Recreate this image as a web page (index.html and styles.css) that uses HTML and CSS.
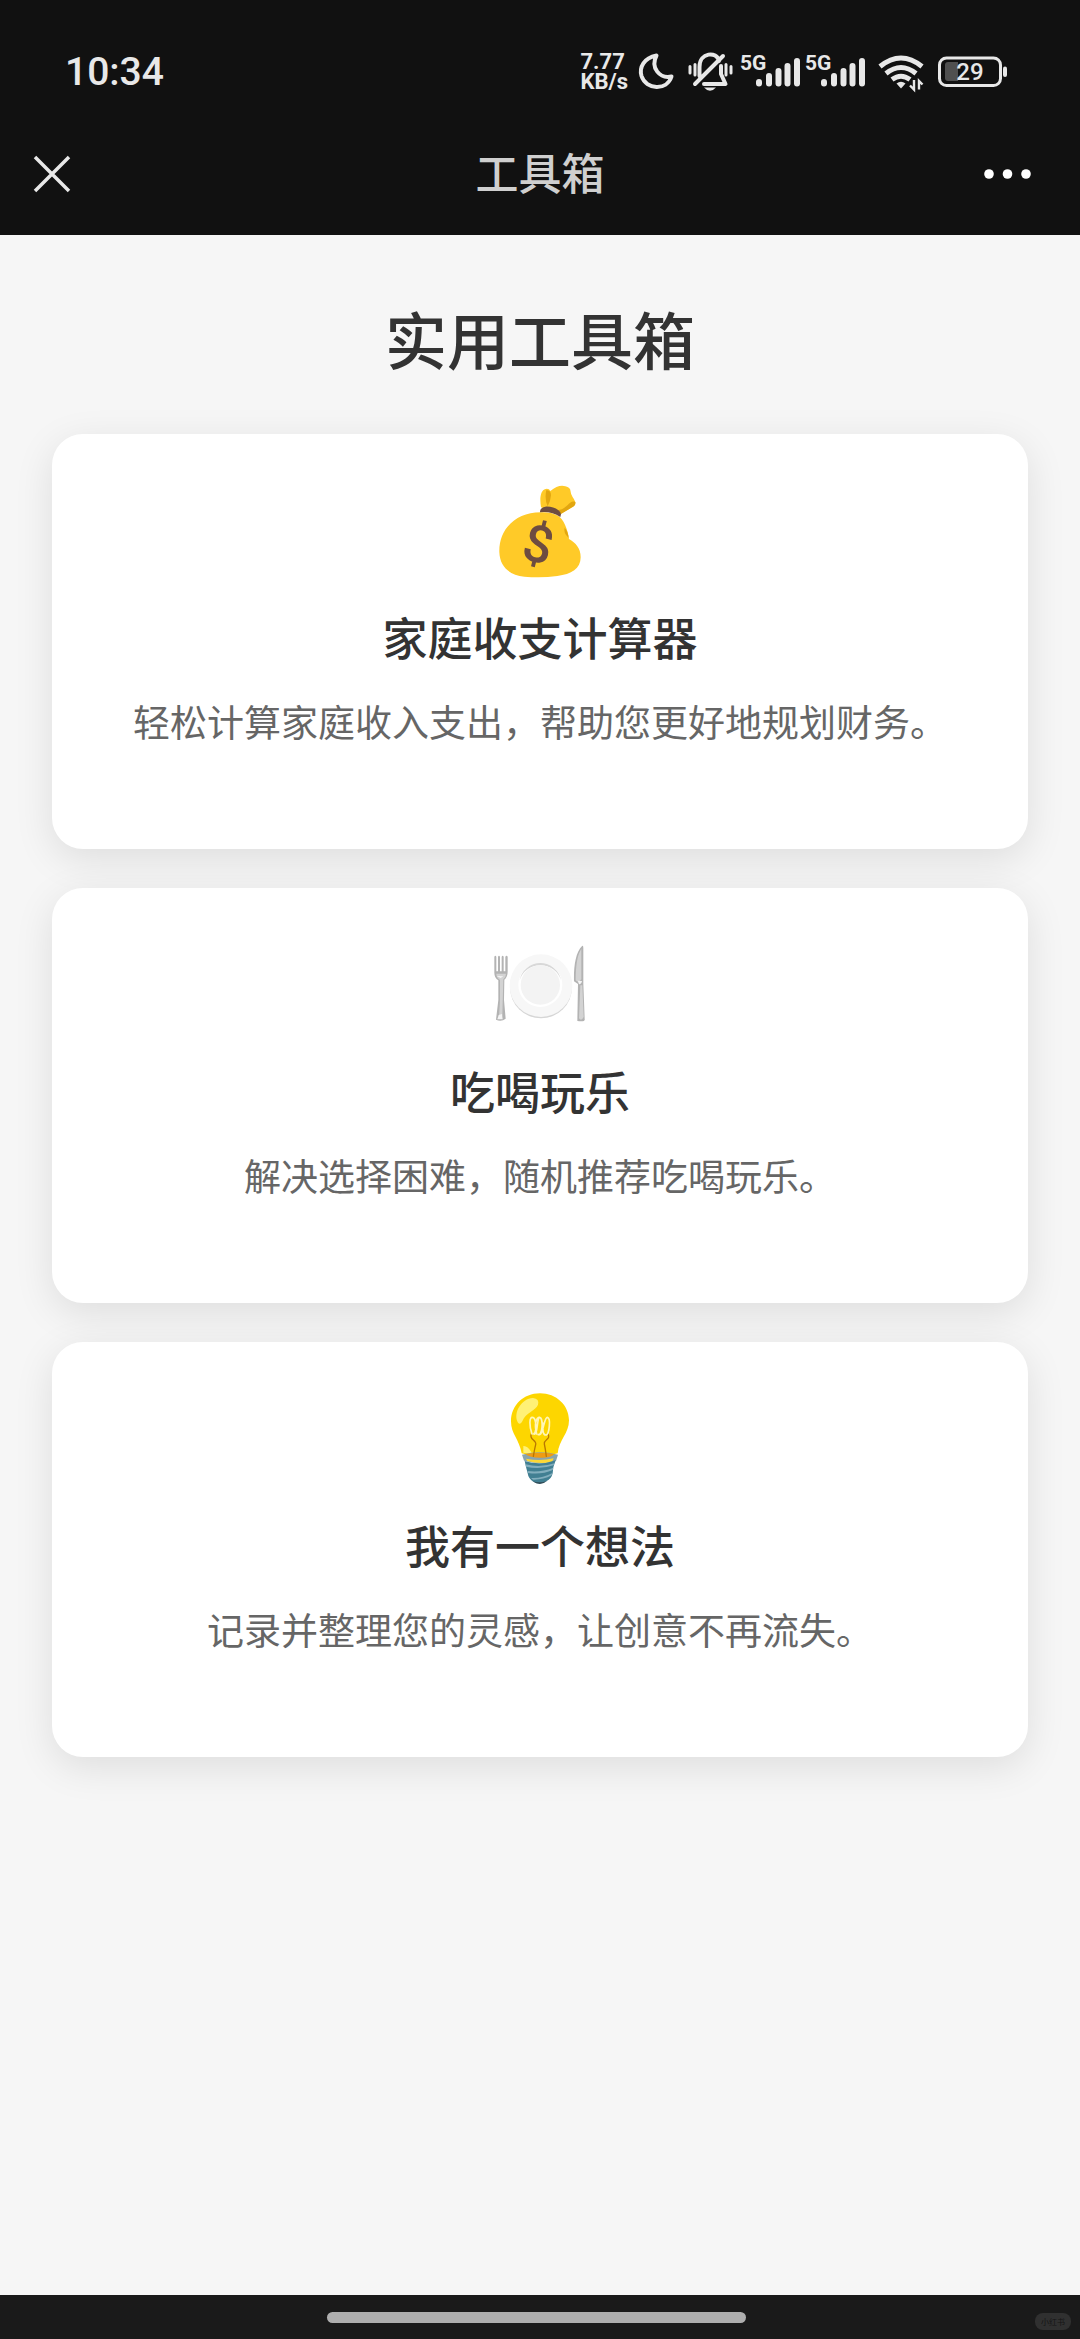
FILE: index.html
```html
<!DOCTYPE html>
<html lang="zh-CN">
<head>
<meta charset="utf-8">
<meta name="viewport" content="width=device-width, initial-scale=1">
<title>工具箱</title>
<link rel="stylesheet" href="styles.css">
</head>
<body>
<header class="top">
  <div class="status">
    <time class="clock">10:34</time>
    <div class="indicators">
      <div class="speed"><span>7.77</span><span>KB/s</span></div>
      <svg width="50" height="44" viewBox="633 50 50 44" aria-hidden="true"><path d="M656.500 55.500C644 58 639 67 641.500 76C646 90 667 91 671.500 76.500C660 79 650 68 656.500 55.500Z" fill="none" stroke="#e8e8e8" stroke-width="4" stroke-linejoin="round"/></svg>
      <svg width="48" height="44" viewBox="688 50 48 44" aria-hidden="true" fill="none" stroke="#e8e8e8" stroke-width="4" stroke-linecap="round"><path d="M699.500 76V67C699.500 52 717 51 719 61M721 66V74L725.500 84H704M695 84L723 56" stroke-linejoin="round"/><path d="M690 66.500v6.500M695 64.500v10.500M726 64.500v10.500M731 66.500v6.500" stroke-width="3"/><path d="M704 87.500h12q-6 6.500-12 0z" fill="#e8e8e8" stroke="none"/></svg>
      <svg width="60" height="44" viewBox="741 50 60 44" role="img" aria-label="5G"><text class="net" x="740" y="70">5G</text><path class="bars" d="M759 83.500v-1.500M769 83.500v-7.500M778.500 83.500v-12.500M787.500 83.500v-17.500M797 83.500v-22.500"/></svg>
      <svg width="60" height="44" viewBox="741 50 60 44" role="img" aria-label="5G"><text class="net" x="740" y="70">5G</text><path class="bars" d="M759 83.500v-1.500M769 83.500v-7.500M778.500 83.500v-12.500M787.500 83.500v-17.500M797 83.500v-22.500"/></svg>
      <svg width="62" height="44" viewBox="871 50 62 44" aria-hidden="true"><path d="M880 66.500Q901 49.500 922 66.500M886 73.500Q901 61.500 916 73.500M892 79.500Q901 73 910 79.500" fill="none" stroke="#e8e8e8" stroke-width="5"/><path d="M896.500 83.500Q901 80 905.500 83.500L901 88.500Z" fill="#e8e8e8"/><path d="M914 80v9.500l-4-4M919 89.500V81l3.500 3.500" fill="none" stroke="#e8e8e8" stroke-width="2.400"/></svg>
      <svg width="69" height="44" viewBox="938 50 69 44" role="img" aria-label="29%"><rect x="939.500" y="58" width="61" height="27.500" rx="7" fill="none" stroke="#e8e8e8" stroke-width="3"/><path d="M958 62h-10q-3 0-3 3v13q0 3 3 3h10z" fill="#505050"/><rect x="1003" y="66.500" width="4" height="10.500" rx="2" fill="#e8e8e8"/><text class="level" x="970" y="80">29</text></svg>
    </div>
  </div>
  <nav class="bar">
    <button class="tool" type="button" aria-label="关闭"><svg width="38" height="38" viewBox="0 0 38 38"><path d="M2 2L36 36M36 2L2 36" stroke="#e8e8e8" stroke-width="3.500"/></svg></button>
    <div class="bar-title">工具箱</div>
    <button class="tool" type="button" aria-label="更多"><svg width="48" height="38" viewBox="0 0 48 38" fill="#fff"><circle cx="5" cy="19" r="4.800"/><circle cx="23.500" cy="19" r="4.800"/><circle cx="42" cy="19" r="4.800"/></svg></button>
  </nav>
</header>
<main class="content">
  <h1>实用工具箱</h1>
  <div class="cards">
    <a class="card" href="#budget">
      <svg class="icon" viewBox="156 78 288 288" aria-hidden="true">
        <path d="M303 142C299 118 300 91 317 87Q327 85 331 93Q356 73 376 79Q391 82 392 95C394 110 402 113 406 127C407 135 401 139 393 144L361 162Z" fill="#ffca28"/>
        <path d="M406 126C389 120 392 133 366 148L352 151L363 162L396 142Q408 136 406 126ZM319 90Q333 91 333 106Q332 123 323 139Q313 117 319 90Z" fill="#e2a610"/>
        <path d="M302 157C224 158 176 210 178 277C180 320 207 345 253 350Q303 355 352 348C394 343 422 326 422 292C422 264 407 249 387 237C383 205 370 177 354 167Q331 155 302 157Z" fill="#ffca28"/>
        <path d="M374 203Q384 213 386 234Q369 218 374 203Z" fill="#e2a610"/>
        <path d="M300 157Q299 143 316 140C337 138 362 149 363 163L361 171Q333 153 300 157Z" fill="#6d4c41"/>
        <text class="coin" x="295" y="306" transform="rotate(14 295 251)">$</text>
      </svg>
      <h2>家庭收支计算器</h2>
      <p>轻松计算家庭收入支出，帮助您更好地规划财务。</p>
    </a>
    <a class="card" href="#fun">
      <svg class="icon" viewBox="156 60 288 288" aria-hidden="true">
        <circle cx="303" cy="202" r="93" fill="#d6d6d6"/><circle cx="303" cy="197" r="94" fill="#f7f7f7"/>
        <circle cx="301" cy="195" r="66" fill="#fff"/><path d="M239 181A63 63 0 0 1 363 181A65 65 0 0 0 239 181Z" fill="#d8d8d8"/><circle cx="301" cy="195" r="59" fill="#f3f3f3"/>
        <path d="M163 110Q166 105 169 110V154H174V110Q177 105 180 110V154H185V110Q188 105 191 110V154H196V110Q200 105 203 110V155Q203 171 193 179L192 240L197 296Q184 306 168 299L175 240V181Q162 174 163 155Z" fill="#b3b3b3"/>
        <path d="M169 161H198Q198 171 190 178L187 286Q184 297 177 294L180 240V180Q169 173 169 161Z" fill="#d3d3d3"/>
        <path d="M427 77Q430 76 430 84V191L434 296Q437 307 412 303L414 192L402 184C401 140 406 97 427 77Z" fill="#b3b3b3"/>
        <path d="M424 87V178Q414 190 407 180Q407 111 424 87ZM421 196H427L431 291Q424 305 417 295Z" fill="#d3d3d3"/>
        <path d="M413 182L426 183Q425 192 417 193ZM176 285L186 282L188 298H172ZM170 168L190 169L182 174Z" fill="#f4f4f4"/>
      </svg>
      <h2>吃喝玩乐</h2>
      <p>解决选择困难，随机推荐吃喝玩乐。</p>
    </a>
    <a class="card" href="#ideas">
      <svg class="icon" viewBox="156 72 288 288" aria-hidden="true">
        <path d="M300 70C250 70 213 107 213 154C213 193 237 206 245 250Q300 268 353 250C357 209 387 191 387 151C387 106 349 70 300 70Z" fill="#fdd600"/>
        <path d="M234 158C218 130 244 85 279 84Q299 86 294 104C288 122 257 127 247 154Q241 166 234 158ZM250 228Q263 227 274 246L275 253L250 248Z" fill="#fff176"/>
        <path d="M246 254Q300 240 354 254L348 273Q300 285 252 272Z" fill="#8aa5ae"/>
        <path d="M256 252Q300 244 343 252Q335 264 300 263Q268 263 256 252Z" fill="#ef9b12"/>
        <path d="M258 266Q300 275 341 265L336 276Q300 284 262 273Z" fill="#fdd835"/>
        <path d="M280 259Q284 236 287 224C291 210 266 209 274 192M319 259Q316 235 313 222C310 208 334 209 324 192" fill="none" stroke="#b87800" stroke-width="4" stroke-linecap="round"/>
        <path d="M276 192C267 166 268 142 277 142C290 142 291 193 280 191C294 202 290 142 299 142C311 144 308 201 293 193C310 204 311 142 322 142C334 145 327 192 319 195C306 196 308 170 310 160M290 192C281 158 291 141 299 142" fill="none" stroke="#fff6b8" stroke-width="5" stroke-linecap="round"/>
        <path d="M254 273Q300 288 347 271L340 292L338 310Q335 326 319 334Q300 347 280 335Q265 326 263 310L258 291Z" fill="#417f92"/>
        <path d="M257 283Q300 295 343 280L341 286Q299 300 258 290ZM263 303Q302 308 340 293L338 300Q305 315 264 309ZM273 324Q306 326 337 309L335 316Q309 330 279 329Z" fill="#82aebd"/>
        <path d="M278 334Q300 340 321 333Q301 350 278 334Z" fill="#344e59"/>
      </svg>
      <h2>我有一个想法</h2>
      <p>记录并整理您的灵感，让创意不再流失。</p>
    </a>
  </div>
</main>
<footer class="gesture">
  <div class="handle"></div>
  <span class="mark">小红书</span>
</footer>
</body>
</html>
```
FILE: styles.css
```css
* {
  box-sizing: border-box;
}

body {
  margin: 0;
  min-height: 100vh;
  display: flex;
  flex-direction: column;
  background: #f6f6f6;
  color: #333;
  font-family: "Noto Sans CJK SC", "Noto Sans", sans-serif;
}

h1, h2, p {
  margin: 0;
}

svg {
  display: block;
  overflow: visible;
}

.top {
  background: #111;
  color: #e8e8e8;
}

.status {
  display: flex;
  align-items: center;
  justify-content: space-between;
  padding: 50px 73px 18px 65px;
}

.clock {
  font: 500 39px/44px Roboto, sans-serif;
}

.indicators {
  display: flex;
  align-items: center;
  gap: 5px;
}

.speed {
  display: flex;
  flex-direction: column;
  font: 700 22px/20px "Liberation Sans", Roboto, sans-serif;
  font-family: Roboto, sans-serif;
}

.net {
  font: 700 21px Roboto, sans-serif;
  fill: #e8e8e8;
}

.level {
  font: 500 24px Roboto, sans-serif;
  fill: #e8e8e8;
  text-anchor: middle;
}

.bars {
  fill: none;
  stroke: #e8e8e8;
  stroke-width: 6px;
  stroke-linecap: round;
}

.bar {
  display: grid;
  grid-template-columns: 1fr auto 1fr;
  align-items: center;
  height: 123px;
  padding: 0 48px 0 33px;
}

.bar-title {
  padding: 0 0 6px 15px;
  font-size: 43px;
  font-weight: 500;
  line-height: 60px;
  color: #cfcfcf;
}

.tool {
  padding: 0;
  border: 0;
  background: none;
  cursor: pointer;
}

.tool:last-child {
  justify-self: end;
}

.tool:first-child {
  justify-self: start;
}

.content {
  flex: 1;
  padding: 63px 52px 52px;
}

h1 {
  margin-bottom: 56px;
  font-size: 62px;
  font-weight: 500;
  line-height: 80px;
  text-align: center;
}

.cards {
  display: grid;
  gap: 39px;
}

.card {
  display: flex;
  flex-direction: column;
  align-items: center;
  padding: 52px 52px 98px;
  border-radius: 31px;
  background: #fff;
  box-shadow: 0 10px 39px rgba(0, 0, 0, 0.1);
  color: inherit;
  text-align: center;
  text-decoration: none;
}

.icon {
  width: 96px;
  height: 96px;
  margin-bottom: 25px;
}

.coin {
  font: 500 154px Roboto, sans-serif;
  fill: #6d4c41;
  text-anchor: middle;
}

h2 {
  margin-bottom: 24px;
  font-size: 45px;
  font-weight: 500;
  line-height: 60px;
}

p {
  font-size: 37px;
  line-height: 60px;
  color: #666;
}

.gesture {
  position: relative;
  display: flex;
  justify-content: center;
  padding: 17px 7px 16px 0;
  background: #1a1a1a;
}

.handle {
  width: 39%;
  height: 11px;
  border-radius: 6px;
  background: #aeaeae;
}

.mark {
  position: absolute;
  right: 9px;
  bottom: 9px;
  padding: 0 6px;
  border-radius: 8px;
  background: #303030;
  color: #151515;
  font-size: 8px;
  line-height: 17px;
}
```
